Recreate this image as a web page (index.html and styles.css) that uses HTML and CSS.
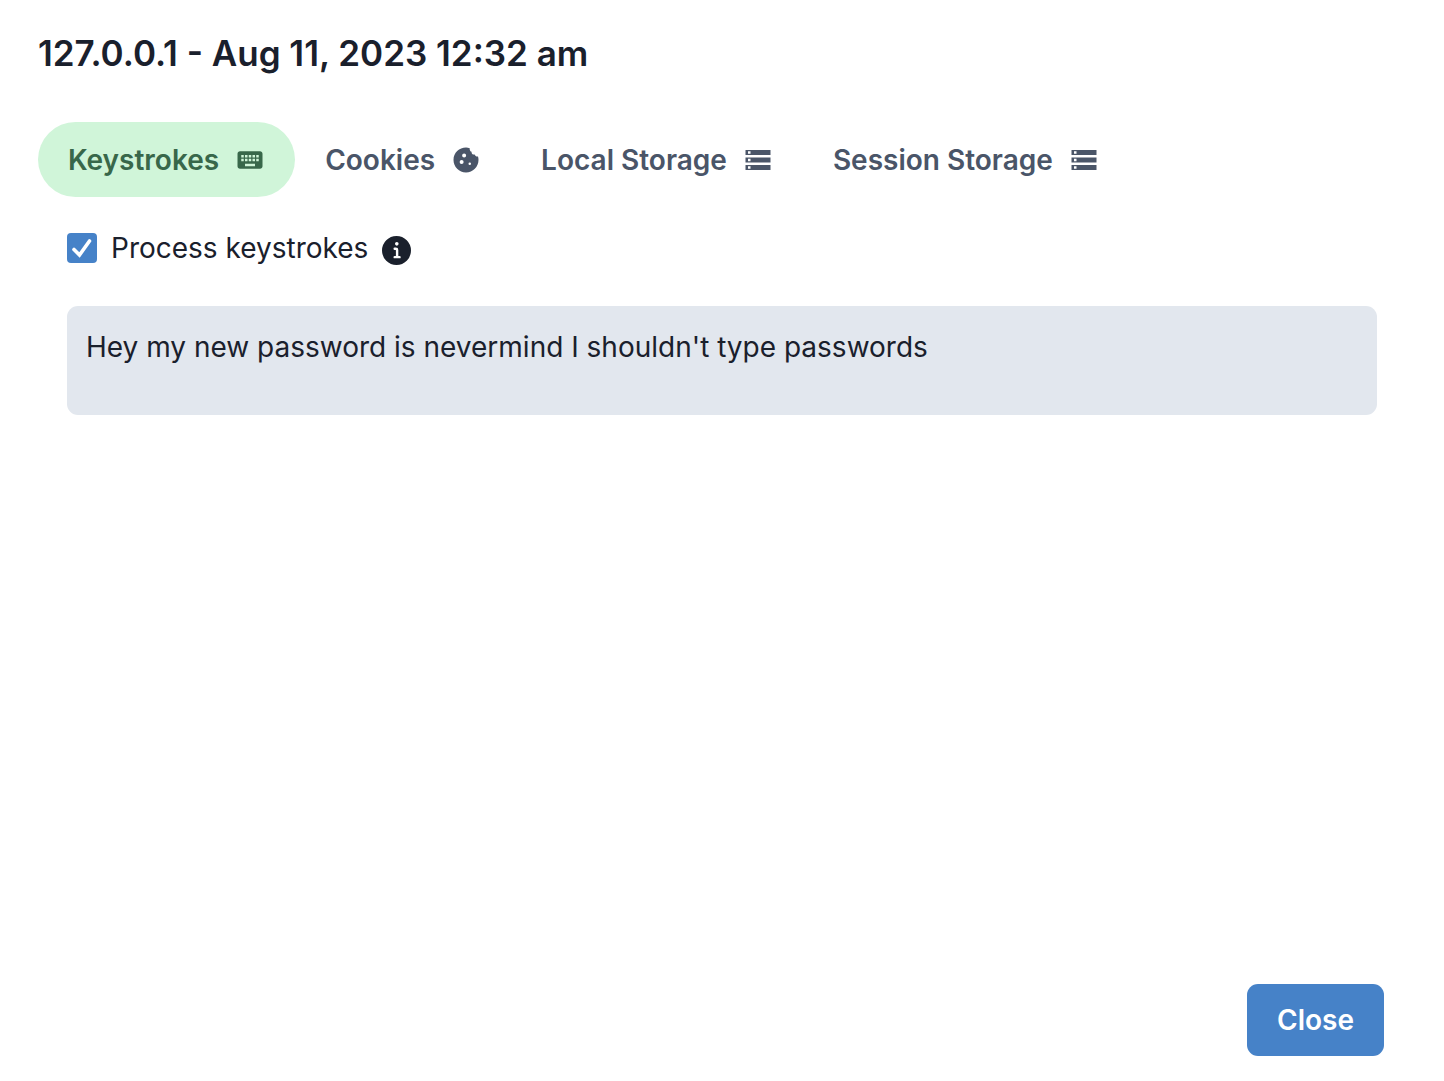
FILE: index.html
```html
<!DOCTYPE html>
<html lang="en">
<head>
<meta charset="utf-8">
<meta name="viewport" content="width=device-width, initial-scale=1">
<title>Session details</title>
<link rel="stylesheet" href="styles.css">
</head>
<body>
<svg class="sprite" aria-hidden="true">
  <symbol id="storage" viewBox="0 0 24 24"><path fill="currentColor" d="M2 20h20v-4H2v4zm2-3h2v2H4v-2zM2 4v4h20V4H2zm4 3H4V5h2v2zm-4 7h20v-4H2v4zm2-3h2v2H4v-2z"/></symbol>
</svg>
<main class="modal">
  <header class="modal-header"><h1 class="title">127.0.0.1 - Aug 11, 2023 12:32 am</h1></header>
  <section class="modal-body">
    <div class="tabs" role="tablist">
      <button class="tab tab-active" type="button" role="tab" aria-selected="true">Keystrokes
        <svg class="icon" viewBox="0 0 24 24"><path fill="currentColor" d="M20 5H4c-1.1 0-1.99.9-1.99 2L2 17c0 1.1.9 2 2 2h16c1.1 0 2-.9 2-2V7c0-1.1-.9-2-2-2zm-9 3h2v2h-2V8zm0 3h2v2h-2v-2zM8 8h2v2H8V8zm0 3h2v2H8v-2zm-1 2H5v-2h2v2zm0-3H5V8h2v2zm9 7H8v-2h8v2zm0-4h-2v-2h2v2zm0-3h-2V8h2v2zm3 3h-2v-2h2v2zm0-3h-2V8h2v2z"/></svg>
      </button>
      <button class="tab" type="button" role="tab" aria-selected="false">Cookies
        <svg class="icon" viewBox="0 0 24 24"><path fill="currentColor" d="M21.6 9.2c-1.2.2-2.3-.5-2.7-1.6-.4.1-.9.1-1.3-.1-.9-.3-1.3-1.2-1.1-2.1-1.1-.3-1.8-1.5-1.5-2.9C8.4.6 2 5.3 2 12c0 5.5 4.5 10 10 10s10-4.500 10-10c0-1-.1-1.900-.4-2.800zM8.500 15.200a1.600 1.600 0 1 1 0-3.200 1.600 1.600 0 0 1 0 3.200zm2-5.200a1.600 1.600 0 1 1 0-3.200 1.600 1.600 0 0 1 0 3.200zm4.500 6a1 1 0 1 1 0-2 1 1 0 0 1 0 2z"/></svg>
      </button>
      <button class="tab" type="button" role="tab" aria-selected="false">Local Storage
        <svg class="icon"><use href="#storage"/></svg>
      </button>
      <button class="tab" type="button" role="tab" aria-selected="false">Session Storage
        <svg class="icon"><use href="#storage"/></svg>
      </button>
    </div>
    <div class="panel" role="tabpanel">
      <div class="option">
        <label class="check"><input class="check-input" type="checkbox" checked>Process keystrokes</label>
        <svg class="info" viewBox="0 0 24 24"><path fill="currentColor" d="M12 0a12 12 0 1 0 12 12A12 12 0 0 0 12 0zm.25 5a1.5 1.5 0 1 1-1.5 1.5 1.5 1.5 0 0 1 1.5-1.5zm2.25 13.5h-4a1 1 0 0 1 0-2h.75a.25.25 0 0 0 .25-.25v-4.5a.25.25 0 0 0-.25-.25h-.75a1 1 0 0 1 0-2h1a2 2 0 0 1 2 2v4.75a.25.25 0 0 0 .25.25h.75a1 1 0 0 1 0 2z"/></svg>
      </div>
      <p class="log">Hey my new password is nevermind I shouldn't type passwords</p>
    </div>
  </section>
  <footer class="modal-footer"><button class="close" type="button">Close</button></footer>
</main>
</body>
</html>
```

FILE: styles.css
```css
* { box-sizing: border-box; margin: 0; }
body { background: #fff; color: #1a202c; font-family: Inter, "Liberation Sans", sans-serif; font-size: 28px; line-height: 44px; }
button { border: 0; background: none; font: inherit; color: inherit; cursor: pointer; }
.sprite { display: none; }
.modal { display: flex; flex-direction: column; min-height: 100vh; }
.modal-header { padding: 28px 38px; }
.title { font-size: 35px; font-weight: 600; line-height: 50px; }
.modal-body { flex: 1; padding: 16px 38px; }
.tabs { display: flex; flex-wrap: wrap; }
.tab { display: flex; align-items: center; gap: 16px; height: 75px; padding: 0 30px; border-radius: 38px; color: #4a5568; font-weight: 600; white-space: nowrap; }
.tab-active { background: #d0f5d9; color: #38674a; }
.icon { width: 30px; height: 30px; flex: none; }
.panel { padding: 29px; }
.option { display: flex; align-items: center; gap: 14px; }
.check { display: flex; align-items: center; gap: 14px; }
.check-input { appearance: none; width: 30px; height: 30px; border-radius: 4px; background: #4682c8 url("data:image/svg+xml,%3Csvg xmlns='http://www.w3.org/2000/svg' viewBox='0 0 30 30'%3E%3Cpath d='M7 16.5l5.5 5.5L22.5 8' fill='none' stroke='white' stroke-width='3.6' stroke-linecap='round'/%3E%3C/svg%3E"); }
.info { width: 29px; height: 29px; margin-top: 4px; }
.log { margin-top: 36px; min-height: 109px; padding: 19px; border-radius: 11px; background: #e2e7ee; }
.modal-footer { display: flex; justify-content: flex-end; padding: 25px 60px; }
.close { height: 72px; padding: 0 30px; border-radius: 11px; background: #4682c8; color: #fff; font-weight: 600; }
```
